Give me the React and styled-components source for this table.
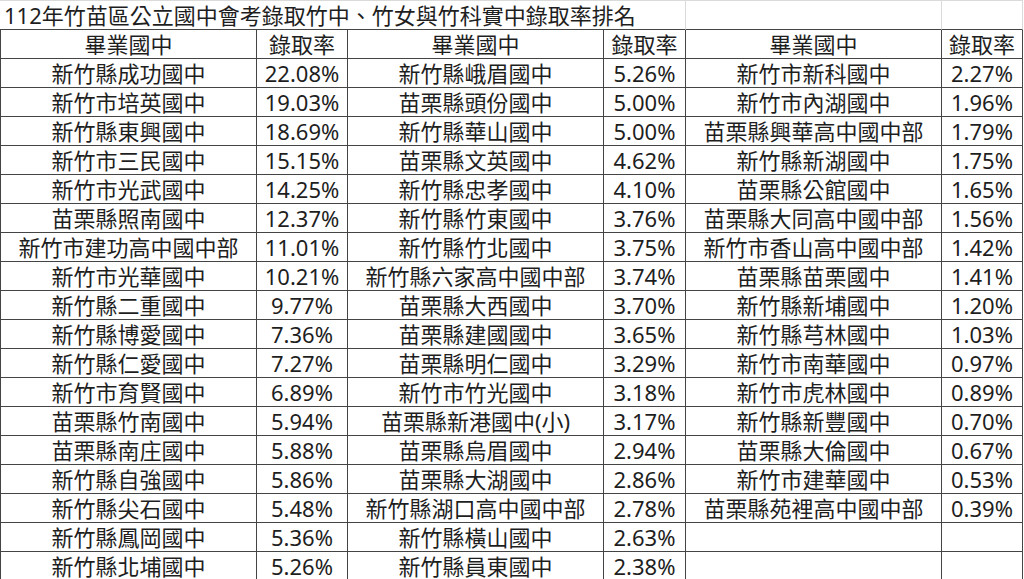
import React from 'react';
import styled, { createGlobalStyle } from 'styled-components';

const GlobalStyle = createGlobalStyle`
  html, body { margin: 0; padding: 0; background: #fff; }
  body { font-family: "Noto Sans", "Noto Sans CJK TC", sans-serif; }
`;

const rows = [
  ['新竹縣成功國中', '22.08%', '新竹縣峨眉國中', '5.26%', '新竹市新科國中', '2.27%'],
  ['新竹市培英國中', '19.03%', '苗栗縣頭份國中', '5.00%', '新竹市內湖國中', '1.96%'],
  ['新竹縣東興國中', '18.69%', '新竹縣華山國中', '5.00%', '苗栗縣興華高中國中部', '1.79%'],
  ['新竹市三民國中', '15.15%', '苗栗縣文英國中', '4.62%', '新竹縣新湖國中', '1.75%'],
  ['新竹市光武國中', '14.25%', '新竹縣忠孝國中', '4.10%', '苗栗縣公館國中', '1.65%'],
  ['苗栗縣照南國中', '12.37%', '新竹縣竹東國中', '3.76%', '苗栗縣大同高中國中部', '1.56%'],
  ['新竹市建功高中國中部', '11.01%', '新竹縣竹北國中', '3.75%', '新竹市香山高中國中部', '1.42%'],
  ['新竹市光華國中', '10.21%', '新竹縣六家高中國中部', '3.74%', '苗栗縣苗栗國中', '1.41%'],
  ['新竹縣二重國中', '9.77%', '苗栗縣大西國中', '3.70%', '新竹縣新埔國中', '1.20%'],
  ['新竹縣博愛國中', '7.36%', '苗栗縣建國國中', '3.65%', '新竹縣芎林國中', '1.03%'],
  ['新竹縣仁愛國中', '7.27%', '苗栗縣明仁國中', '3.29%', '新竹市南華國中', '0.97%'],
  ['新竹市育賢國中', '6.89%', '新竹市竹光國中', '3.18%', '新竹市虎林國中', '0.89%'],
  ['苗栗縣竹南國中', '5.94%', '苗栗縣新港國中(小)', '3.17%', '新竹縣新豐國中', '0.70%'],
  ['苗栗縣南庄國中', '5.88%', '苗栗縣烏眉國中', '2.94%', '苗栗縣大倫國中', '0.67%'],
  ['新竹縣自強國中', '5.86%', '苗栗縣大湖國中', '2.86%', '新竹市建華國中', '0.53%'],
  ['新竹縣尖石國中', '5.48%', '新竹縣湖口高中國中部', '2.78%', '苗栗縣苑裡高中國中部', '0.39%'],
  ['新竹縣鳳岡國中', '5.36%', '新竹縣橫山國中', '2.63%', '', ''],
  ['新竹縣北埔國中', '5.26%', '新竹縣員東國中', '2.38%', '', ''],
];

const header = ['畢業國中', '錄取率', '畢業國中', '錄取率', '畢業國中', '錄取率'];

function App() {
  return (
    <>
      <GlobalStyle />
      <Sheet>
        <TitleCell>112年竹苗區公立國中會考錄取竹中、竹女與竹科實中錄取率排名</TitleCell>
        <BlankTitle />
        <BlankTitle />
        {header.map((h, i) => (
          <Cell key={'h' + i} first={i === 0}>{h}</Cell>
        ))}
        {rows.map((r, ri) =>
          r.map((v, ci) => (
            <Cell key={ri + '-' + ci} first={ci === 0}>{v}</Cell>
          ))
        )}
      </Sheet>
    </>
  );
}

const Sheet = styled.div`
  display: grid;
  grid-template-columns: 257px 91px 256px 82px 256px 81px;
  grid-auto-rows: 29px;
  grid-template-rows: 30px;
  width: 1023px;
  color: #1e1e1e;
  font-size: 22px;
`;

const TitleCell = styled.div`
  grid-column: 1 / span 4;
  box-sizing: border-box;
  border-top: 1px solid #dadada;
  border-right: 1px solid #dadada;
  border-bottom: 1px solid #444;
  padding-left: 4px;
  display: flex;
  align-items: center;
  white-space: nowrap;
  line-height: 1;
`;

const BlankTitle = styled.div`
  box-sizing: border-box;
  border-top: 1px solid #dadada;
  border-right: 1px solid #dadada;
  border-bottom: 1px solid #444;
`;

const Cell = styled.div`
  box-sizing: border-box;
  border-right: 1px solid #444;
  border-bottom: 1px solid #444;
  border-left: ${(p) => (p.first ? '1px solid #444' : 'none')};
  display: flex;
  align-items: center;
  justify-content: center;
  white-space: nowrap;
  line-height: 1;
`;

export default App;
